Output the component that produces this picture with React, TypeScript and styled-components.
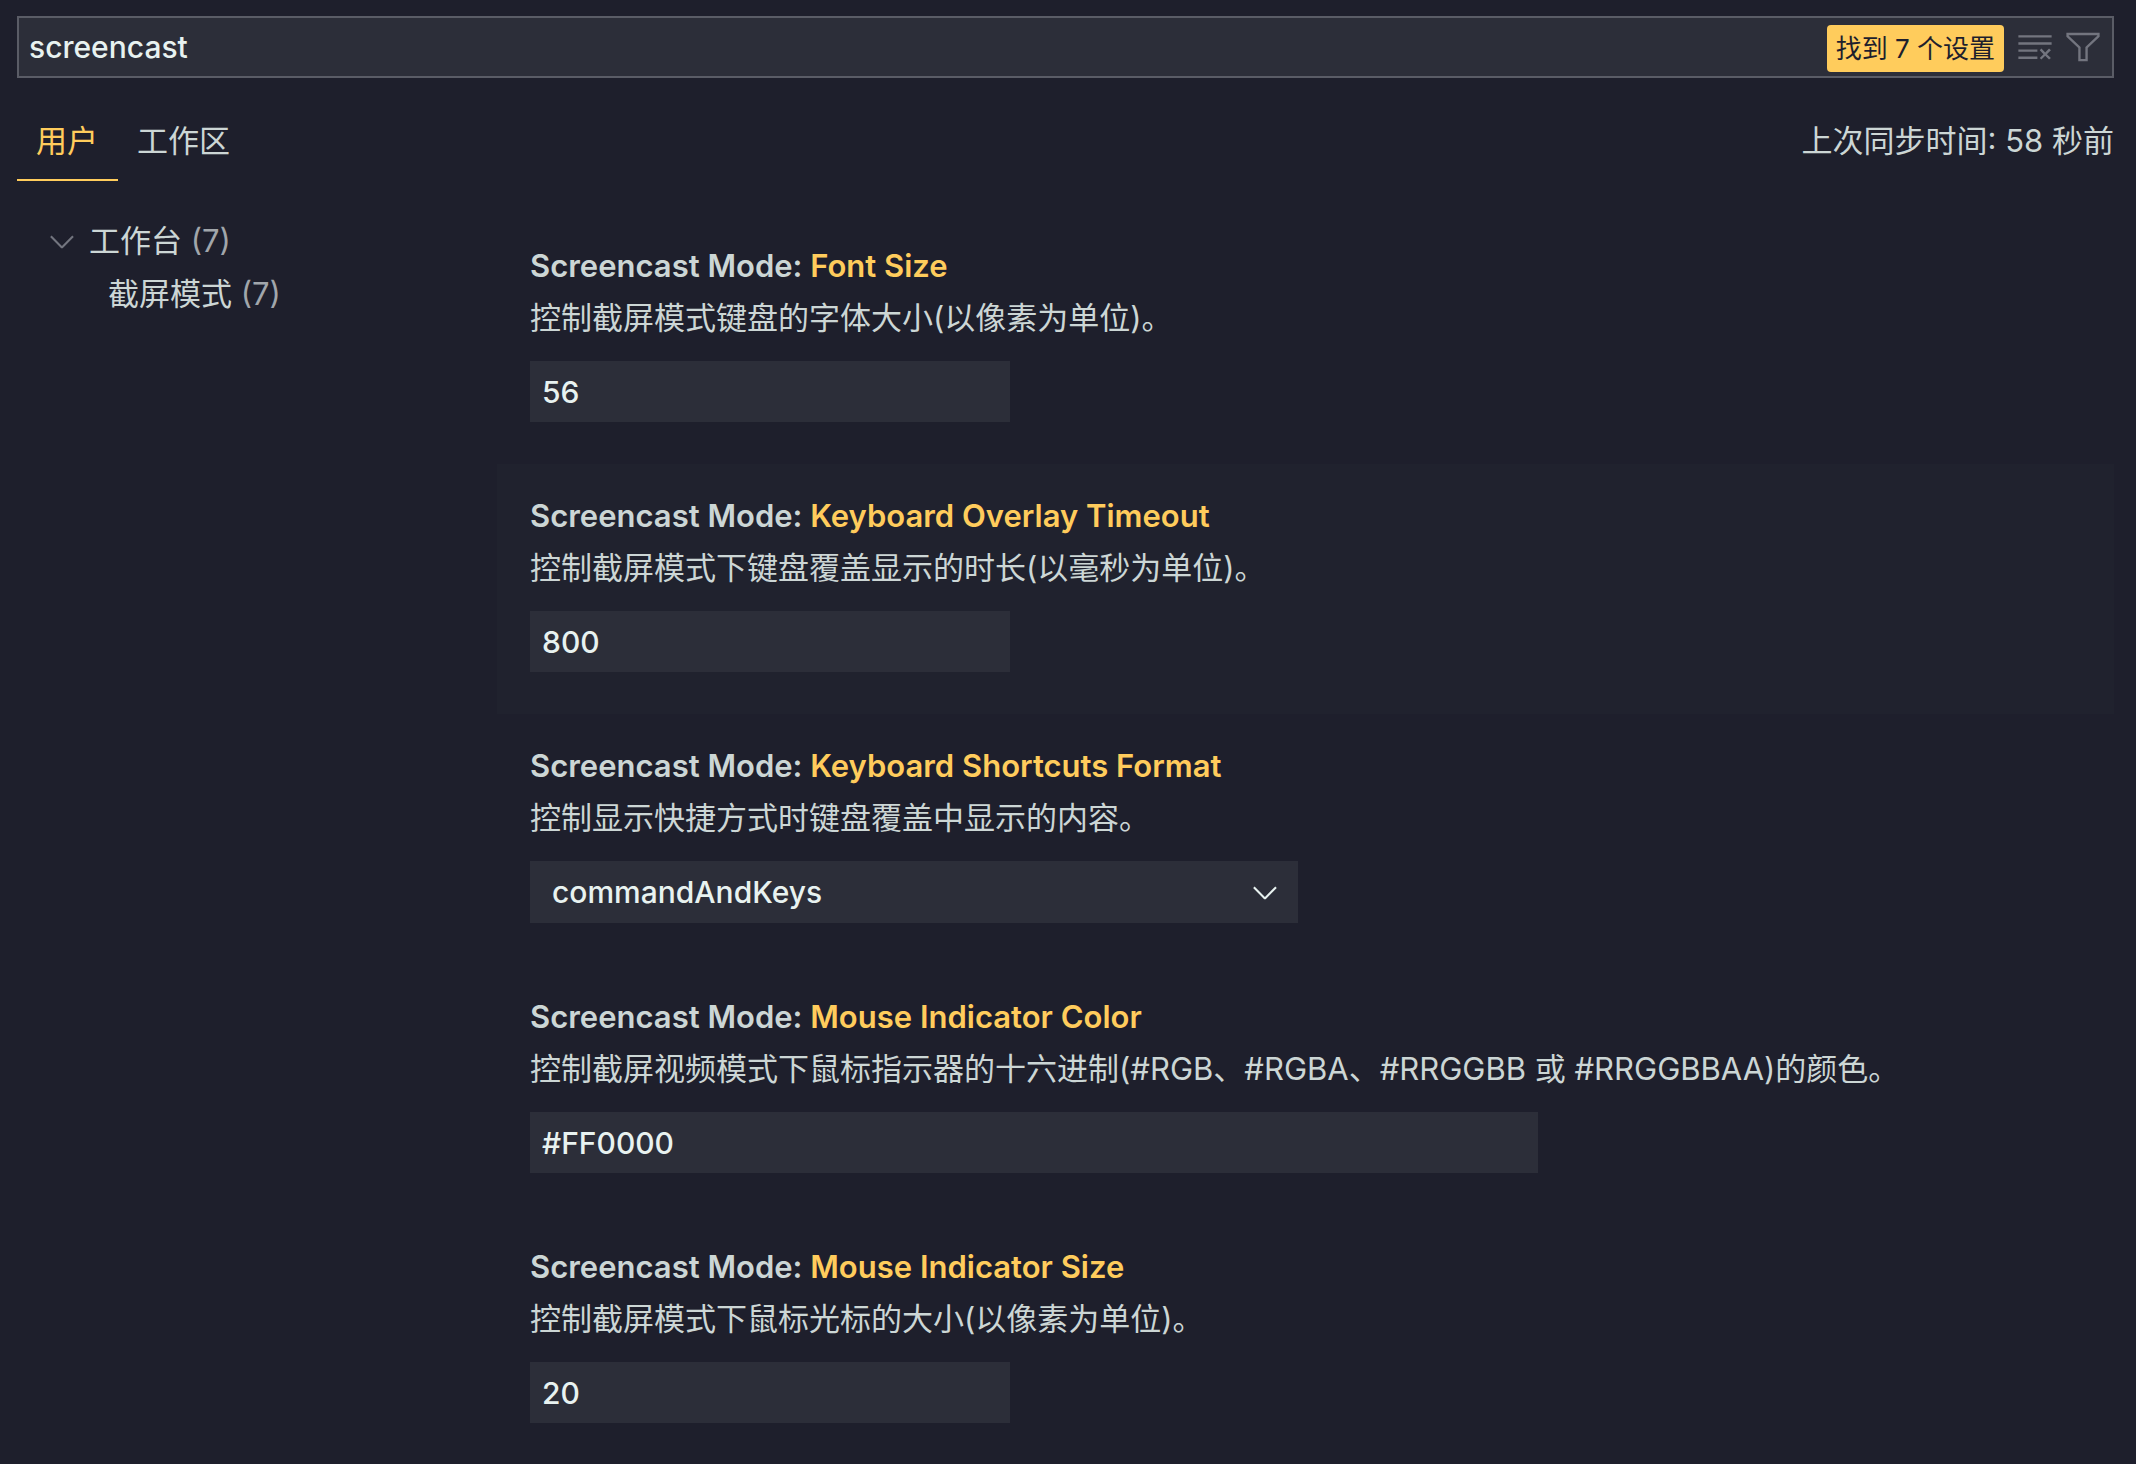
import React, { useState } from "react";
import styled, { createGlobalStyle } from "styled-components";

const colors = {
  background: "#1e1f2c",
  field: "#2c2e39",
  hover: "#20222e",
  border: "#5a5c66",
  text: "#ccd6d5",
  bright: "#e8f2f0",
  muted: "#a1a6ab",
  icon: "#73757f",
  accent: "#ffcc5c",
};

const GlobalStyle = createGlobalStyle`
  *, *::before, *::after { box-sizing: border-box; }
  body {
    margin: 0;
    background: ${colors.background};
    color: ${colors.text};
    font-family: Inter, "Noto Sans CJK SC", sans-serif;
    font-size: 31px;
    line-height: 42px;
  }
  button, input, select { font: inherit; color: inherit; margin: 0; }
  input, select { font-size: 30px; font-weight: 500; }
`;

const Page = styled.main`
  min-height: 100vh;
  padding: 16px 22px 0 17px;
`;

const SearchBox = styled.div`
  display: flex;
  align-items: center;
  height: 62px;
  padding: 0 10px 0 0;
  background: ${colors.field};
  border: 2px solid ${colors.border};
`;

const SearchInput = styled.input`
  flex: 1;
  min-width: 0;
  height: 58px;
  padding: 0 10px;
  border: 0;
  outline: 0;
  background: transparent;
  color: ${colors.bright};
`;

const ResultBadge = styled.output`
  display: flex;
  align-items: center;
  height: 47px;
  margin: 2px 12px 0 0;
  padding: 2px 9px 0;
  border-radius: 4px;
  background: ${colors.accent};
  color: ${colors.background};
  font-size: 26px;
  white-space: nowrap;
`;

const Actions = styled.div`
  display: flex;
  gap: 10px;
`;

const IconButton = styled.button`
  display: flex;
  padding: 0;
  border: 0;
  background: transparent;
  color: ${colors.icon};
  cursor: pointer;
`;

const Icon = styled.svg`
  display: block;
  flex: none;
  width: 38px;
  height: 38px;
  fill: currentColor;
`;

const TabBar = styled.header`
  display: flex;
  align-items: center;
  justify-content: space-between;
  padding-top: 23px;
`;

const Tabs = styled.nav`
  display: flex;
`;

const Tab = styled.button<{ $active: boolean }>`
  height: 80px;
  padding: 0 20px 0 19px;
  border: 0;
  border-top: 2px solid transparent;
  border-bottom: 2px solid ${(p) => (p.$active ? colors.accent : "transparent")};
  background: transparent;
  color: ${(p) => (p.$active ? colors.accent : colors.text)};
  cursor: pointer;
`;

const SyncStatus = styled.span`
  white-space: nowrap;
`;

const Body = styled.div`
  display: grid;
  grid-template-columns: 480px minmax(0, 1fr);
  padding-top: 33px;
`;

const Tree = styled.nav`
  display: flex;
  flex-direction: column;
`;

const TreeRow = styled.button<{ $indent: number }>`
  display: flex;
  align-items: center;
  gap: 8px;
  width: 100%;
  height: 53px;
  padding: 0 0 0 ${(p) => p.$indent}px;
  border: 0;
  background: transparent;
  text-align: left;
  cursor: pointer;

  ${Icon} { color: ${colors.icon}; }
`;

const Count = styled.span`
  color: ${colors.muted};
`;

const SettingsList = styled.section`
  min-width: 0;
`;

const Setting = styled.article<{ $highlighted: boolean }>`
  display: flex;
  flex-direction: column;
  align-items: flex-start;
  padding: 31px 33px 42px;
  background: ${(p) => (p.$highlighted ? colors.hover : "transparent")};

  &:last-child { padding-bottom: 0; }
`;

const Title = styled.label`
  font-weight: 600;
  color: ${colors.text};
`;

const Key = styled.span`
  color: ${colors.accent};
`;

const Description = styled.p`
  margin: 10px 0 22px;
`;

const Field = styled.input<{ $wide: boolean }>`
  width: ${(p) => (p.$wide ? 1008 : 480)}px;
  max-width: 100%;
  height: 61px;
  padding: 0 12px;
  border: 0;
  outline: 0;
  background: ${colors.field};
  color: ${colors.bright};
`;

const SelectWrap = styled.div`
  position: relative;
  width: 768px;
  max-width: 100%;
  color: ${colors.bright};

  ${Icon} {
    position: absolute;
    top: 12px;
    right: 14px;
    pointer-events: none;
  }
`;

const Select = styled.select`
  display: block;
  appearance: none;
  width: 100%;
  height: 62px;
  padding: 0 60px 0 22px;
  border: 0;
  border-radius: 0;
  outline: 0;
  background: ${colors.field};
`;

const ChevronDown = () => (
  <Icon viewBox="0 0 16 16" aria-hidden="true">
    <path d="M7.976 10.072l4.357-4.357.62.618L8.284 11h-.618L3 6.333l.619-.618 4.357 4.357z" />
  </Icon>
);

const ClearAll = () => (
  <Icon viewBox="0 0 16 16" aria-hidden="true">
    <path d="M10 12.6l.7.7 1.6-1.6 1.6 1.6.8-.7L13 11l1.7-1.6-.8-.8-1.6 1.7-1.6-1.7-.7.8 1.6 1.6-1.6 1.6zM1 4h14V3H1v1zm0 3h14V6H1v1zm8 2.5V9H1v1h8v-.5zM9 13v-1H1v1h8z" />
  </Icon>
);

const Filter = () => (
  <Icon viewBox="0 0 16 16" aria-hidden="true">
    <path d="M15 2v1.67l-5 4.759V14H6V8.429l-5-4.76V2h14zM7 8v5h2V8l5-4.76V3H2v.24L7 8z" />
  </Icon>
);

type SettingData = {
  id: string;
  name: string;
  description: string;
  value: string;
  kind: "number" | "text" | "select";
  highlighted?: boolean;
};

const settings: SettingData[] = [
  { id: "fontSize", name: "Font Size", description: "控制截屏模式键盘的字体大小(以像素为单位)。", value: "56", kind: "number" },
  { id: "overlayTimeout", name: "Keyboard Overlay Timeout", description: "控制截屏模式下键盘覆盖显示的时长(以毫秒为单位)。", value: "800", kind: "number", highlighted: true },
  { id: "shortcutsFormat", name: "Keyboard Shortcuts Format", description: "控制显示快捷方式时键盘覆盖中显示的内容。", value: "commandAndKeys", kind: "select" },
  { id: "indicatorColor", name: "Mouse Indicator Color", description: "控制截屏视频模式下鼠标指示器的十六进制(#RGB、#RGBA、#RRGGBB 或 #RRGGBBAA)的颜色。", value: "#FF0000", kind: "text" },
  { id: "indicatorSize", name: "Mouse Indicator Size", description: "控制截屏模式下鼠标光标的大小(以像素为单位)。", value: "20", kind: "number" },
];

const SettingItem = ({ id, name, description, value, kind, highlighted = false }: SettingData) => (
  <Setting $highlighted={highlighted}>
    <Title htmlFor={id}>
      Screencast Mode: <Key>{name}</Key>
    </Title>
    <Description>{description}</Description>
    {kind === "select" ? (
      <SelectWrap>
        <Select id={id} defaultValue={value}>
          <option>{value}</option>
        </Select>
        <ChevronDown />
      </SelectWrap>
    ) : (
      <Field id={id} type="text" inputMode={kind === "number" ? "numeric" : "text"} defaultValue={value} $wide={kind === "text"} />
    )}
  </Setting>
);

export default function App() {
  const [tab, setTab] = useState("用户");

  return (
    <>
      <GlobalStyle />
      <Page lang="zh-CN">
        <SearchBox role="search">
          <SearchInput type="text" aria-label="搜索设置" defaultValue="screencast" />
          <ResultBadge>找到 7 个设置</ResultBadge>
          <Actions>
            <IconButton type="button" aria-label="清除搜索"><ClearAll /></IconButton>
            <IconButton type="button" aria-label="筛选设置"><Filter /></IconButton>
          </Actions>
        </SearchBox>
        <TabBar>
          <Tabs>
            {["用户", "工作区"].map((name) => (
              <Tab key={name} type="button" $active={tab === name} onClick={() => setTab(name)}>
                {name}
              </Tab>
            ))}
          </Tabs>
          <SyncStatus>上次同步时间: 58 秒前</SyncStatus>
        </TabBar>
        <Body>
          <Tree>
            <TreeRow type="button" $indent={26}>
              <ChevronDown />
              <span>工作台 <Count>(7)</Count></span>
            </TreeRow>
            <TreeRow type="button" $indent={91}>
              <span>截屏模式 <Count>(7)</Count></span>
            </TreeRow>
          </Tree>
          <SettingsList>
            {settings.map((item) => (
              <SettingItem key={item.id} {...item} />
            ))}
          </SettingsList>
        </Body>
      </Page>
    </>
  );
}
